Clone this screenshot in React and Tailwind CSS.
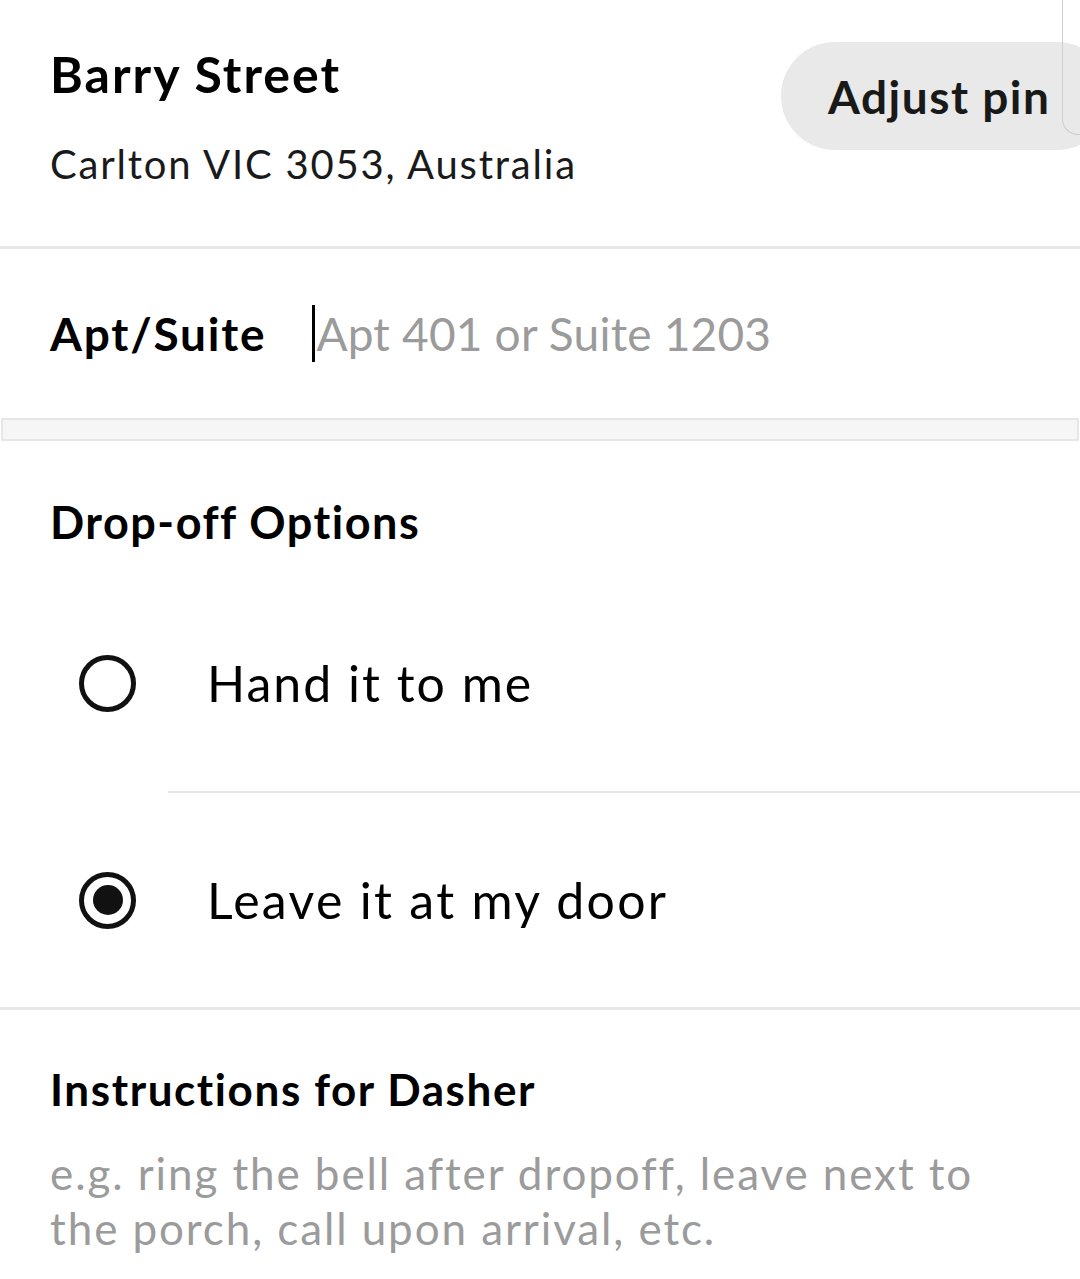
export default function App() {
  return (
    <div className="relative w-[1080px] h-[1279px] bg-white overflow-hidden text-black font-['Lato',sans-serif]">
      {/* Header */}
      <div className="relative h-[246px] pl-[50px]">
        <div className="pt-[44px] text-[50px] font-bold leading-[60px] tracking-[2px]">Barry Street</div>
        <div className="mt-[38px] text-[40px] leading-[44px] tracking-[1.8px] text-[#1a1a1a]">Carlton VIC 3053, Australia</div>
        <div className="absolute left-[781px] top-[42px] w-[330px] h-[108px] rounded-full bg-[#e9e9e9] flex items-center pl-[47px]">
          <span className="text-[46px] font-bold text-[#191919] tracking-[1.5px]">Adjust pin</span>
        </div>
        <div className="absolute left-[1062px] top-[-20px] w-[40px] h-[155px] border-l border-b border-[#cfcfcf] rounded-bl-[16px]"></div>
      </div>
      <div className="h-[3px] bg-[#e8e8e8]"></div>
      {/* Apt */}
      <div className="h-[169px] flex items-center pl-[50px]">
        <span className="text-[46px] font-bold tracking-[1.8px]">Apt/Suite</span>
        <div className="ml-[46px] w-[3px] h-[57px] bg-black"></div>
        <span className="ml-[1px] text-[46px] tracking-[0.2px] text-[#9b9b9b]">Apt 401 or Suite 1203</span>
      </div>
      <div className="mx-[1px] h-[23px] border-2 border-[#e6e6e6] bg-[#f6f6f6]"></div>
      {/* Drop-off */}
      <div className="pl-[50px] pt-[56px] text-[45px] font-bold leading-[50px] tracking-[1.5px]">Drop-off Options</div>
      <div className="mt-[28px] h-[216px] flex items-center">
        <div className="ml-[79px] w-[57px] h-[57px] rounded-full border-[5px] border-[#111]"></div>
        <span className="ml-[71px] text-[50px] tracking-[2px]">Hand it to me</span>
      </div>
      <div className="ml-[168px] h-[2px] bg-[#e6e6e6]"></div>
      <div className="h-[214px] flex items-center">
        <div className="ml-[79px] w-[57px] h-[57px] rounded-full border-[5px] border-[#111] flex items-center justify-center">
          <div className="w-[30px] h-[30px] rounded-full bg-[#111]"></div>
        </div>
        <span className="ml-[71px] text-[50px] tracking-[2.3px]">Leave it at my door</span>
      </div>
      <div className="h-[3px] bg-[#e8e8e8]"></div>
      {/* Instructions */}
      <div className="pl-[50px] pt-[54px] text-[44px] font-bold leading-[50px] tracking-[1.6px]">Instructions for Dasher</div>
      <div className="pl-[50px] mt-[32px] text-[44px] leading-[55px] tracking-[1.9px] text-[#9b9b9b] whitespace-nowrap">
        e.g. ring the bell after dropoff, leave next to
        <br />
        the porch, call upon arrival, etc.
      </div>
    </div>
  );
}
